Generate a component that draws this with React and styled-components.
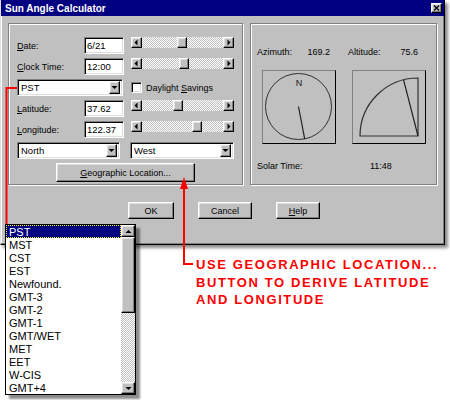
import React from "react";
import styled, { createGlobalStyle, css } from "styled-components";

const GlobalStyle = createGlobalStyle`
  html, body {
    margin: 0;
    padding: 0;
    background: #fff;
  }
  body {
    font-family: "Liberation Sans", Arial, sans-serif;
    color: #000;
  }
`;

const raised = css`
  box-sizing: border-box;
  border: 1px solid;
  border-color: #fff #000 #000 #fff;
  box-shadow: inset -1px -1px #808080, inset 1px 1px #dfdfdf;
  background: #c0c0c0;
`;

const sunken = css`
  box-sizing: border-box;
  border: 1px solid;
  border-color: #808080 #fff #fff #808080;
  box-shadow: inset 1px 1px #000, inset -1px -1px #dfdfdf;
  background: #fff;
`;

const dither = css`
  background-color: #fff;
  background-image: conic-gradient(#c0c0c0 25%, #fff 0 50%, #c0c0c0 0 75%, #fff 0);
  background-size: 2px 2px;
`;

const Page = styled.div`
  position: relative;
  width: 450px;
  height: 400px;
  overflow: hidden;
  background: #fff;
`;

const Dialog = styled.div`
  width: 445px;
  box-sizing: border-box;
  background: #c0c0c0;
  border-style: solid;
  border-width: 0 1px 1px 1px;
  border-color: #000 #000 #000 #dfdfdf;
  box-shadow: inset -1px -1px #808080, inset 1px 0 #fff,
    3px 3px 3px rgba(0, 0, 0, 0.45);
  padding-bottom: 25px;
`;

const TitleBar = styled.div`
  height: 16px;
  background: #000080;
  display: flex;
  align-items: center;
  justify-content: space-between;
  padding: 0 2px 0 4px;
  color: #fff;
  font-weight: bold;
  font-size: 10px;
`;

const CloseButton = styled.div`
  ${raised};
  width: 11px;
  height: 10px;
  display: flex;
  align-items: center;
  justify-content: center;
`;

const Body = styled.div`
  display: flex;
  gap: 7px;
  padding: 7px 0 0 7px;
`;

const GroupBox = styled.div`
  box-sizing: border-box;
  width: ${(p) => p.$w}px;
  height: 162px;
  border: 1px solid #808080;
  box-shadow: inset 1px 1px #fff, 1px 1px #fff;
  display: flex;
  flex-direction: column;
`;

const InputGroup = styled(GroupBox)`
  padding: 13px 8px 0 8px;
  gap: 4px;
`;

const ResultGroup = styled(GroupBox)`
  padding: 22px 0 0 6px;
`;

const Row = styled.div`
  display: flex;
  align-items: center;
  height: 17px;
  gap: ${(p) => p.$gap || 0}px;
`;

const Label = styled.div`
  width: ${(p) => p.$w || 67}px;
  font-size: 9px;
  white-space: nowrap;
`;

const TextBox = styled.div`
  ${sunken};
  width: 40px;
  height: 17px;
  padding-left: 2px;
  display: flex;
  align-items: center;
  font-size: 9.5px;
`;

const Slider = styled.div`
  align-self: flex-start;
  margin-left: 7px;
  width: 103px;
  height: 11px;
  display: flex;
`;

const SliderArrow = styled.div`
  ${raised};
  width: 11px;
  height: 11px;
  display: flex;
  align-items: center;
  justify-content: center;
`;

const SliderTrack = styled.div`
  flex: 1;
  ${dither};
  display: flex;
`;

const SliderThumb = styled.div`
  ${raised};
  width: 10px;
  height: 11px;
  margin-left: ${(p) => p.$pos}px;
`;

const Combo = styled.div`
  ${sunken};
  width: ${(p) => p.$w}px;
  height: 17px;
  padding: 2px 2px 2px 3px;
  display: flex;
  align-items: center;
  justify-content: space-between;
  font-size: 9.5px;
`;

const ComboButton = styled.div`
  ${raised};
  width: 11px;
  height: 13px;
  display: flex;
  align-items: center;
  justify-content: center;
`;

const CheckBox = styled.div`
  ${sunken};
  width: 11px;
  height: 11px;
  margin-left: 8px;
`;

const CheckLabel = styled.div`
  margin-left: 4px;
  font-size: 9px;
`;

const Button = styled.div`
  ${raised};
  width: ${(p) => p.$w}px;
  height: ${(p) => p.$h || 17}px;
  display: flex;
  align-items: center;
  justify-content: center;
  font-size: 9px;
`;

const GeoButton = styled(Button)`
  align-self: center;
`;

const ButtonRow = styled.div`
  display: flex;
  justify-content: center;
  gap: 24px;
  margin-top: 17px;
  padding-left: 3px;
`;

const InfoRow = styled.div`
  display: flex;
  align-items: center;
  height: 12px;
  font-size: 9px;
  margin-top: ${(p) => p.$mt || 0}px;
`;

const Reading = styled.div`
  width: ${(p) => p.$w}px;
  margin-left: ${(p) => p.$ml || 0}px;
  display: flex;
  justify-content: space-between;
`;

const Diagrams = styled.div`
  display: flex;
  gap: 16px;
  margin-top: 12px;
  padding-left: 5px;
`;

const DiagramBox = styled.div`
  box-sizing: border-box;
  width: 74px;
  height: 74px;
  border: 1px solid;
  border-color: #808080 #000 #000 #808080;
`;

const DropList = styled.div`
  position: absolute;
  left: 5px;
  top: 224px;
  width: 131px;
  box-sizing: border-box;
  border: 1px solid #000;
  background: #fff;
  display: flex;
  box-shadow: 4px 4px 2px rgba(0, 0, 0, 0.45);
`;

const Items = styled.div`
  flex: 1;
  display: flex;
  flex-direction: column;
`;

const Item = styled.div`
  box-sizing: border-box;
  height: 13px;
  padding-left: 3px;
  display: flex;
  align-items: center;
  font-size: 11px;
  ${(p) =>
    p.$selected &&
    css`
      background: #000080;
      color: #fff;
      outline: 1px dotted #ffff00;
      outline-offset: -1px;
    `}
`;

const ScrollBar = styled.div`
  width: 14px;
  display: flex;
  flex-direction: column;
`;

const ScrollButton = styled.div`
  ${raised};
  height: 12px;
  display: flex;
  align-items: center;
  justify-content: center;
`;

const ScrollThumb = styled.div`
  ${raised};
  height: 76px;
`;

const ScrollTrack = styled.div`
  flex: 1;
  ${dither};
`;

const Callout = styled.div`
  margin-top: 11px;
  padding-left: 196px;
  color: #ff0000;
  font-weight: bold;
  font-size: 13px;
  line-height: 17.5px;
  letter-spacing: 1.6px;
`;

const Annotations = styled.svg`
  position: absolute;
  left: 0;
  top: 0;
  pointer-events: none;
`;

const Tri = ({ dir }) => {
  const pts = {
    left: "4.5,0.5 1.5,3.5 4.5,6.5",
    right: "2.5,0.5 5.5,3.5 2.5,6.5",
    up: "0.5,5 3.5,2 6.5,5",
    down: "0.5,2 3.5,5 6.5,2",
  }[dir];
  return (
    <svg width="7" height="7" viewBox="0 0 7 7">
      <polygon points={pts} fill="#000" />
    </svg>
  );
};

const HSlider = ({ pos }) => (
  <Slider>
    <SliderArrow>
      <Tri dir="left" />
    </SliderArrow>
    <SliderTrack>
      <SliderThumb $pos={pos} />
    </SliderTrack>
    <SliderArrow>
      <Tri dir="right" />
    </SliderArrow>
  </Slider>
);

const ComboBox = ({ w, value }) => (
  <Combo $w={w}>
    <span>{value}</span>
    <ComboButton>
      <Tri dir="down" />
    </ComboButton>
  </Combo>
);

const Compass = ({ azimuth }) => {
  const r = 33;
  const a = (azimuth * Math.PI) / 180;
  const x = 35.5 + r * Math.sin(a);
  const y = 35.5 - r * Math.cos(a);
  return (
    <svg width="72" height="72" viewBox="0 0 72 72">
      <circle cx="35.5" cy="35.5" r={r} fill="none" stroke="#303030" strokeWidth="1" />
      <text
        x="36"
        y="15"
        fontSize="9"
        textAnchor="middle"
        fontFamily="Liberation Sans, Arial, sans-serif"
        fill="#202020"
      >
        N
      </text>
      <line x1="35.5" y1="35.5" x2={x} y2={y} stroke="#202020" strokeWidth="1.2" />
    </svg>
  );
};

const AltitudeDial = ({ altitude }) => {
  const r = 58;
  const a = (altitude * Math.PI) / 180;
  const x = 65 - r * Math.cos(a);
  const y = 65 - r * Math.sin(a);
  return (
    <svg width="72" height="72" viewBox="0 0 72 72">
      <path d="M7,65 A58,58 0 0 1 65,7 L65,65 Z" fill="none" stroke="#303030" strokeWidth="1.2" />
      <line x1="65" y1="65" x2={x} y2={y} stroke="#202020" strokeWidth="1.2" />
    </svg>
  );
};

const sliders = [
  { key: "date", label: <><u>D</u>ate:</>, value: "6/21", pos: 35 },
  { key: "clock", label: <><u>C</u>lock Time:</>, value: "12:00", pos: 37 },
];

const coords = [
  { key: "lat", label: <><u>L</u>atitude:</>, value: "37.62", pos: 31 },
  { key: "lon", label: <><u>L</u>ongitude:</>, value: "122.37", pos: 50 },
];

const zones = [
  "PST", "MST", "CST", "EST", "Newfound.", "GMT-3", "GMT-2",
  "GMT-1", "GMT/WET", "MET", "EET", "W-CIS", "GMT+4",
];

const FieldRow = ({ label, value, pos }) => (
  <Row>
    <Label>{label}</Label>
    <TextBox>{value}</TextBox>
    <HSlider pos={pos} />
  </Row>
);

export default function App() {
  return (
    <Page>
      <GlobalStyle />
      <Dialog>
        <TitleBar>
          <span>Sun Angle Calculator</span>
          <CloseButton>
            <svg width="7" height="6" viewBox="0 0 7 6">
              <path d="M1,0.5 L6,5.5 M6,0.5 L1,5.5" stroke="#000" strokeWidth="1.3" />
            </svg>
          </CloseButton>
        </TitleBar>
        <Body>
          <InputGroup $w={235}>
            {sliders.map((s) => (
              <FieldRow key={s.key} {...s} />
            ))}
            <Row>
              <ComboBox w={106} value="PST" />
              <CheckBox />
              <CheckLabel>
                Daylight <u>S</u>avings
              </CheckLabel>
            </Row>
            {coords.map((s) => (
              <FieldRow key={s.key} {...s} />
            ))}
            <Row $gap={10}>
              <ComboBox w={103} value="North" />
              <ComboBox w={104} value="West" />
            </Row>
            <GeoButton $w={139} $h={19}>
              <span>
                <u>G</u>eographic Location...
              </span>
            </GeoButton>
          </InputGroup>
          <ResultGroup $w={187}>
            <InfoRow>
              <Reading $w={73}>
                <span>Azimuth:</span>
                <span>169.2</span>
              </Reading>
              <Reading $w={70} $ml={18}>
                <span>Altitude:</span>
                <span>75.6</span>
              </Reading>
            </InfoRow>
            <Diagrams>
              <DiagramBox>
                <Compass azimuth={169.2} />
              </DiagramBox>
              <DiagramBox>
                <AltitudeDial altitude={75.6} />
              </DiagramBox>
            </Diagrams>
            <InfoRow $mt={16}>
              <Label $w={113}>Solar Time:</Label>
              <span>11:48</span>
            </InfoRow>
          </ResultGroup>
        </Body>
        <ButtonRow>
          <Button $w={46}>OK</Button>
          <Button $w={54}>Cancel</Button>
          <Button $w={44}>
            <span>
              <u>H</u>elp
            </span>
          </Button>
        </ButtonRow>
      </Dialog>

      <Callout>
        USE GEOGRAPHIC LOCATION...
        <br />
        BUTTON TO DERIVE LATITUDE
        <br />
        AND LONGITUDE
      </Callout>

      <DropList>
        <Items>
          {zones.map((z, i) => (
            <Item key={z} $selected={i === 0}>
              {z}
            </Item>
          ))}
        </Items>
        <ScrollBar>
          <ScrollButton>
            <Tri dir="up" />
          </ScrollButton>
          <ScrollThumb />
          <ScrollTrack />
          <ScrollButton>
            <Tri dir="down" />
          </ScrollButton>
        </ScrollBar>
      </DropList>

      <Annotations width="450" height="400" viewBox="0 0 450 400">
        <polyline points="17,88 6.5,88 6.5,224" fill="none" stroke="#ff0000" strokeWidth="2" />
        <polyline points="193,264 184,264 184,188" fill="none" stroke="#ff0000" strokeWidth="2" />
        <polygon points="184,177 180,189 188,189" fill="#ff0000" />
      </Annotations>
    </Page>
  );
}
